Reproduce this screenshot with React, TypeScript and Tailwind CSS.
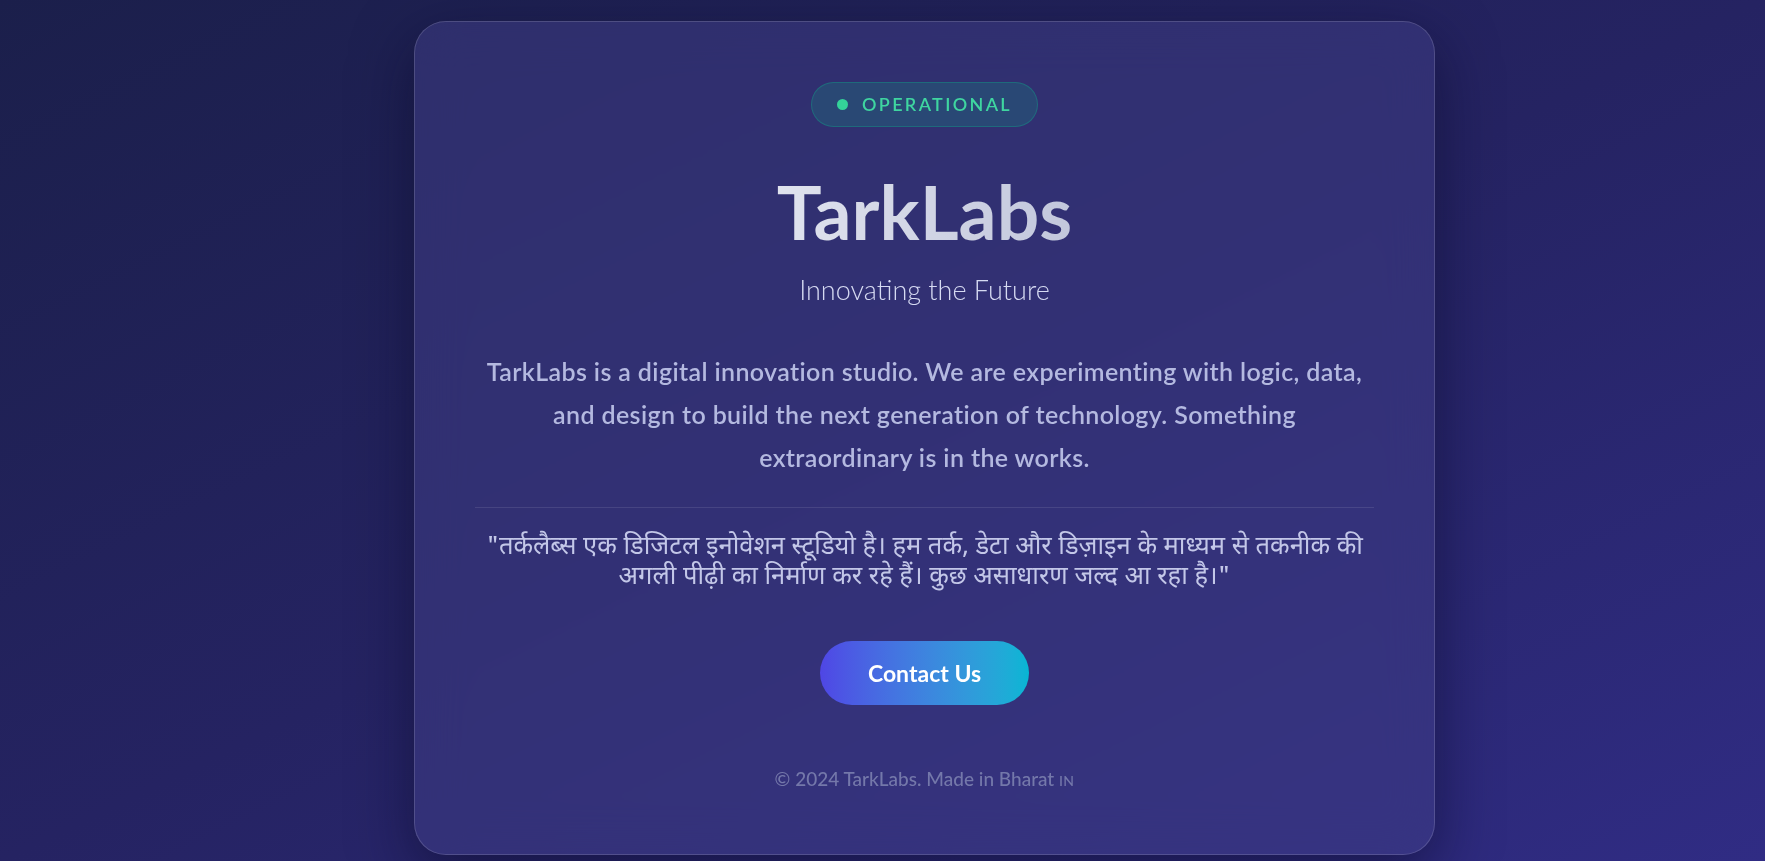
import React from 'react';

export default function App() {
  return (
    <div className="min-h-screen w-full overflow-hidden bg-gradient-to-br from-[#1b1f4b] via-[#252362] to-[#302c84] font-['Lato','Noto_Sans',sans-serif]">
      <div className="flex justify-center pt-[21px] pb-[8px] pl-[84px]">
        <main className="w-[1021px] rounded-[32px] border border-white/15 bg-[#3f3d88]/50 p-[60px] shadow-[0_20px_60px_rgba(10,10,40,0.55)] backdrop-blur-xl flex flex-col items-center text-center">
          <div className="flex h-[45px] items-center gap-[14px] rounded-full border border-emerald-400/25 bg-emerald-400/15 px-[25px]">
            <span className="h-[11px] w-[11px] rounded-full bg-[#34d399]" />
            <span className="text-[18px] font-semibold tracking-[0.13em] text-[#3fd5a0]">OPERATIONAL</span>
          </div>

          <h1 className="mt-[45px] bg-gradient-to-r from-[#e0e3ee] to-[#c2c7dc] bg-clip-text text-[75px] font-bold leading-[79px] text-transparent">
            TarkLabs
          </h1>

          <p className="mt-[22px] text-[27px] font-light leading-tight text-[#d6daf2]">Innovating the Future</p>

          <p className="mt-[43px] w-[900px] text-[25px] font-semibold leading-[43px] tracking-[0.015em] text-[#b4b9e0]">
            TarkLabs is a digital innovation studio. We are experimenting with logic, data,
            <br />
            and design to build the next generation of technology. Something
            <br />
            extraordinary is in the works.
          </p>

          <div className="mt-[28px] h-px w-full bg-white/10" />

          <p className="mt-[25px] text-[25.5px] leading-[30px] text-[#c3c7e8] font-['Noto_Sans_Devanagari','Lohit_Devanagari','FreeSans',sans-serif]">
            "तर्कलैब्स एक डिजिटल इनोवेशन स्टूडियो है। हम तर्क, डेटा और डिज़ाइन के माध्यम से तकनीक की
            <br />
            अगली पीढ़ी का निर्माण कर रहे हैं। कुछ असाधारण जल्द आ रहा है।"
          </p>

          <button className="mt-[48px] h-[64px] rounded-full bg-gradient-to-r from-[#4f46e5] to-[#06b6d4] px-[48px] text-[23px] font-bold text-white">
            Contact Us
          </button>

          <p className="mt-[61px] text-[19px] font-medium leading-[26px] text-[#7478aa]">
            © 2024 TarkLabs. Made in Bharat <span className="text-[14px] tracking-wide">IN</span>
          </p>
        </main>
      </div>
    </div>
  );
}
